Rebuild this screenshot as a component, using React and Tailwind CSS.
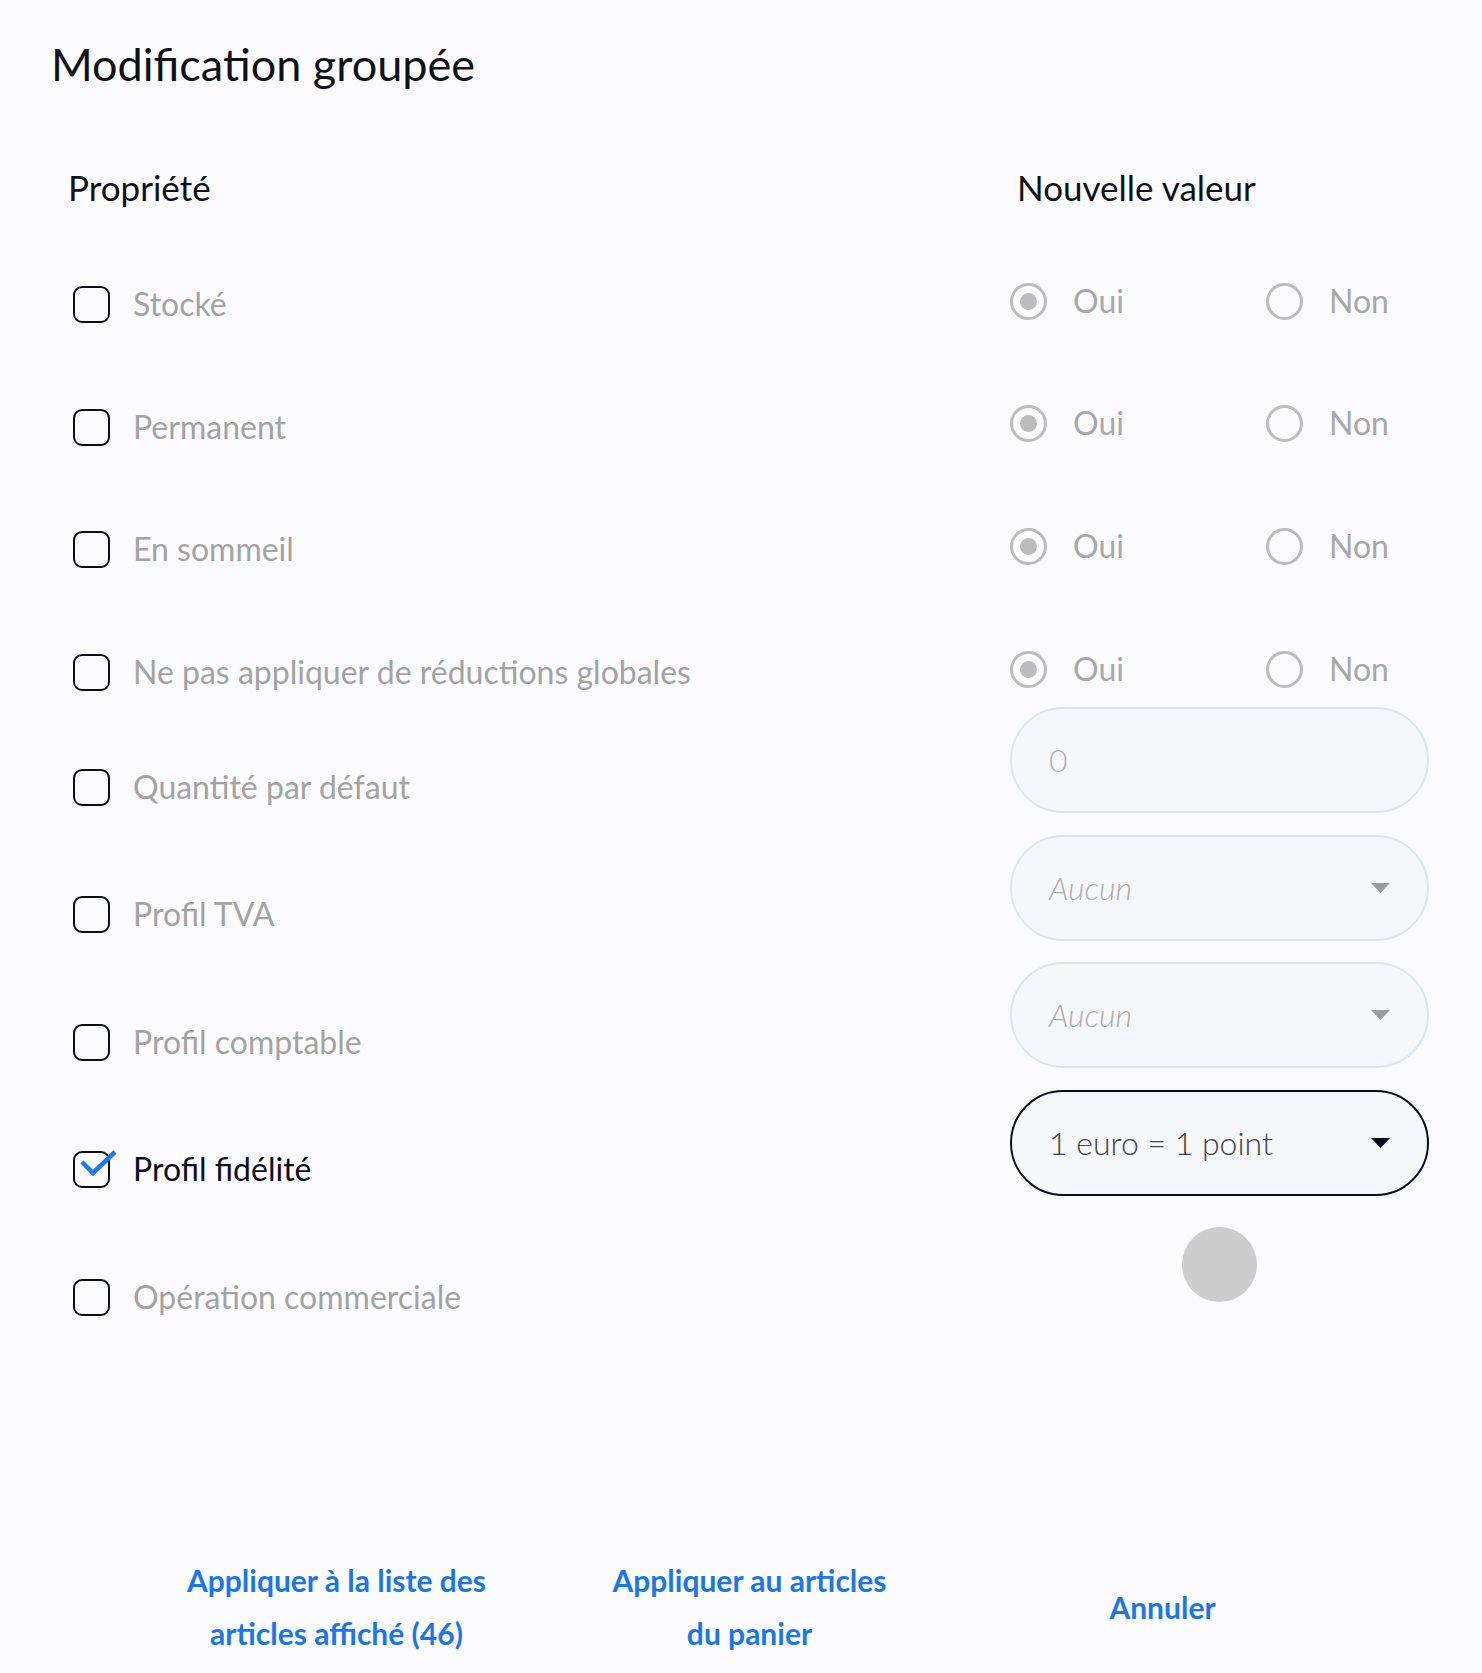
import React, { useState } from "react";

const rows = [
  { id: "stock", label: "Stocké", kind: "radio", row: "h-[122px]", pad: "pt-[3px]" },
  { id: "perm", label: "Permanent", kind: "radio", row: "h-[123px]", pad: "pt-[4px]" },
  { id: "sleep", label: "En sommeil", kind: "radio", row: "h-[123px]", pad: "pt-[3px]" },
  { id: "noglob", label: "Ne pas appliquer de réductions globales", kind: "radio", row: "h-[57px]", pad: "pt-[3px]" },
  { id: "qty", label: "Quantité par défaut", kind: "input", row: "h-[128px]", pad: "pt-[61px]" },
  { id: "tva", label: "Profil TVA", kind: "select", value: "Aucun", row: "h-[127px]", pad: "pt-[60px]" },
  { id: "compta", label: "Profil comptable", kind: "select", value: "Aucun", row: "h-[128px]", pad: "pt-[61px]" },
  { id: "fid", label: "Profil fidélité", kind: "select", value: "1 euro = 1 point", row: "h-[137px]", pad: "pt-[60px]" },
  { id: "op", label: "Opération commerciale", kind: "loader", row: "h-[88px]", pad: "pt-[51px]" },
];

const Radio = ({ checked, label }) => (
  <div className="flex items-center w-[256px] shrink-0">
    <span className="w-[37px] h-[37px] shrink-0 rounded-full border-[3.5px] border-[#bcbcbc] flex items-center justify-center">
      {checked && <span className="w-[17px] h-[17px] rounded-full bg-[#bcbcbc]" />}
    </span>
    <span className="ml-[26px] text-[32px] leading-[1.2] text-[#a8a8a8]">{label}</span>
  </div>
);

const Arrow = ({ dark }) => (
  <svg width="19" height="10" viewBox="0 0 19 10" className="shrink-0">
    <polygon points="0,0 19,0 9.5,10" fill={dark ? "#0b0b20" : "#9c9c9c"} />
  </svg>
);

const CheckBox = ({ checked }) => (
  <span className="relative w-[37px] h-[37px] shrink-0 rounded-[9px] border-[2.5px] border-[#0b0b22]">
    {checked && (
      <svg
        width="46"
        height="37"
        viewBox="0 0 46 37"
        className="absolute -left-[2.5px] -top-[2.5px] overflow-visible"
      >
        <polyline
          points="9,12 20,23 42,2"
          fill="none"
          stroke="#1e78ee"
          strokeWidth="4.5"
          strokeLinejoin="miter"
        />
      </svg>
    )}
  </span>
);

const Control = ({ row, active }) => {
  if (row.kind === "radio") {
    return (
      <div className="flex">
        <Radio checked label="Oui" />
        <Radio label="Non" />
      </div>
    );
  }
  if (row.kind === "input") {
    return (
      <div className="w-[419px] h-[106px] rounded-full bg-[#f5f7f8] border-2 border-[#dfe5ea] flex items-center pl-[37px]">
        <span className="text-[32px] font-light text-[#adadad]">0</span>
      </div>
    );
  }
  if (row.kind === "select") {
    return (
      <div
        className={`w-[419px] h-[106px] rounded-full bg-[#f5f7f8] flex items-center justify-between pl-[37px] pr-[37px] ${
          active ? "border-[2.5px] border-[#0b0b20]" : "border-2 border-[#dfe5ea]"
        }`}
      >
        <span
          className={`text-[32px] font-light ${
            active ? "text-[#444444]" : "italic text-[#adadad]"
          }`}
        >
          {row.value}
        </span>
        <Arrow dark={active} />
      </div>
    );
  }
  return (
    <div className="w-[419px] flex justify-center">
      <span className="w-[75px] h-[75px] rounded-full bg-[#cdcdcd]" />
    </div>
  );
};

export default function App() {
  const [checked, setChecked] = useState({ fid: true });

  const toggle = (id) => setChecked((prev) => ({ ...prev, [id]: !prev[id] }));

  return (
    <div className="w-[1482px] min-h-[1673px] bg-[#fbfbfd] font-['Lato',sans-serif] text-[#111118]">
      <h1 className="pt-[37px] pl-[51px] text-[45px] leading-[1.2] font-normal">
        Modification groupée
      </h1>

      {/* Column headers */}
      <div className="flex mt-[75px] text-[35px] leading-[1.2]">
        <div className="w-[1017px] shrink-0 pl-[68px]">Propriété</div>
        <div>Nouvelle valeur</div>
      </div>

      {/* Rows */}
      <div className="mt-[74px]">
        {rows.map((row) => {
          const on = !!checked[row.id];
          return (
            <div key={row.id} className={`flex items-start ${row.row}`}>
              <div
                className={`w-[1010px] shrink-0 pl-[73px] flex items-center cursor-pointer ${row.pad}`}
                onClick={() => toggle(row.id)}
              >
                <CheckBox checked={on} />
                <span
                  className={`ml-[23px] text-[32px] leading-[1.2] ${
                    on ? "text-[#0d0d24]" : "text-[#a3a3a3]"
                  }`}
                >
                  {row.label}
                </span>
              </div>
              <Control row={row} active={on} />
            </div>
          );
        })}
      </div>

      {/* Actions */}
      <div className="flex items-center pl-[130px] mt-[239px] text-[30px] leading-[53px] font-bold text-[#1a76ec]">
        <button className="w-[413px] text-center">
          Appliquer à la liste des
          <br />
          articles affiché (46)
        </button>
        <button className="w-[413px] text-center">
          Appliquer au articles
          <br />
          du panier
        </button>
        <button className="w-[413px] text-center">Annuler</button>
      </div>
    </div>
  );
}
